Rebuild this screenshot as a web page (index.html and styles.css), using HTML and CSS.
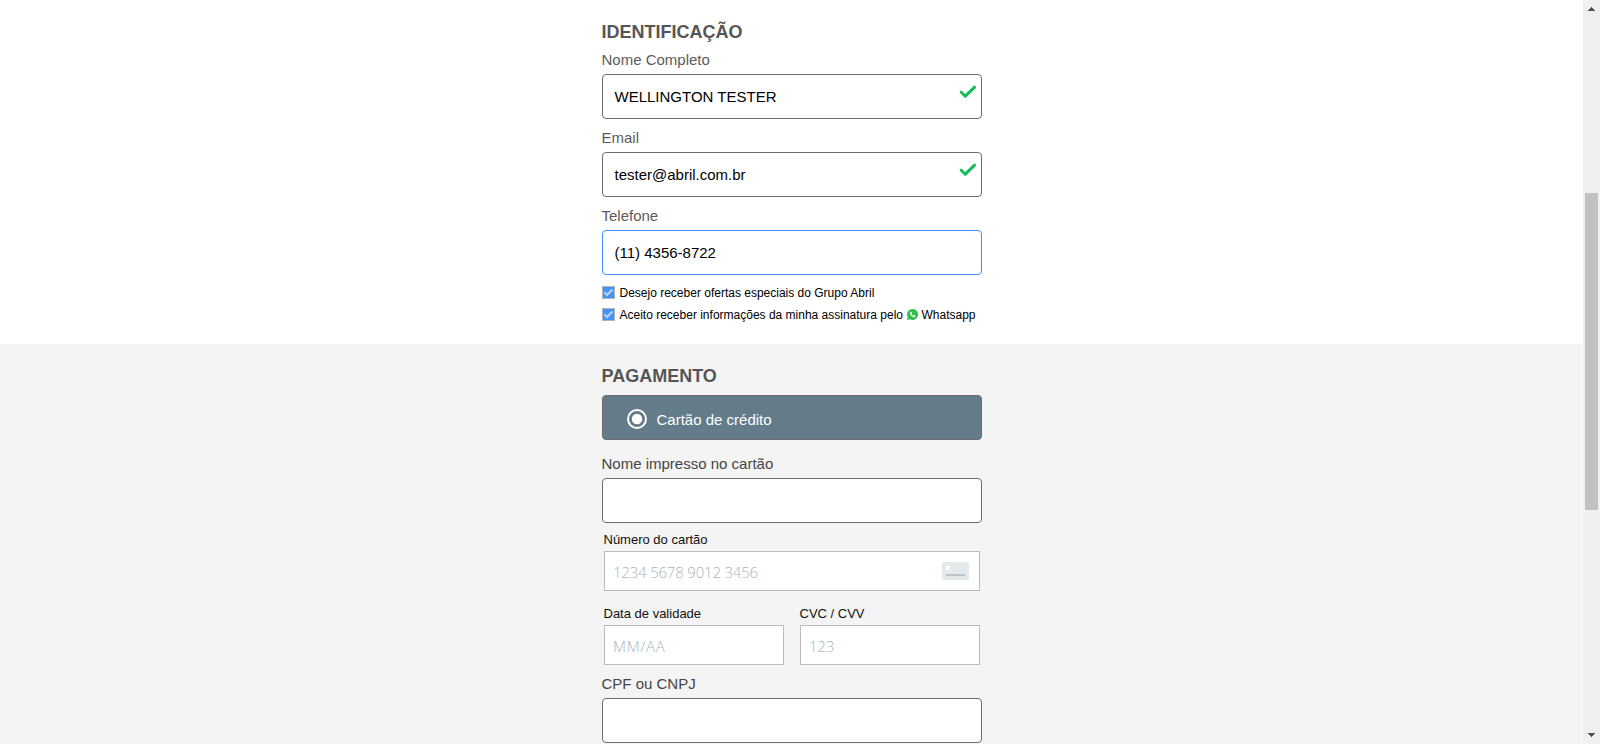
FILE: index.html
```html
<!DOCTYPE html>
<html lang="pt-BR">
<head>
<meta charset="utf-8">
<title>Assinatura</title>
<link rel="stylesheet" href="styles.css">
</head>
<body>
<div class="viewport">
  <main class="page">
    <section class="section identification">
      <div class="column">
        <h2 class="title">IDENTIFICAÇÃO</h2>
        <label class="label">Nome Completo</label>
        <div class="field"><span>WELLINGTON TESTER</span>
          <svg class="check" width="18" height="14" viewBox="0 0 18 14"><path d="M2.200 7.200 6.300 11.200 15.600 2.200"/></svg></div>
        <label class="label">Email</label>
        <div class="field"><span>tester@abril.com.br</span>
          <svg class="check" width="18" height="14" viewBox="0 0 18 14"><path d="M2.200 7.200 6.300 11.200 15.600 2.200"/></svg></div>
        <label class="label">Telefone</label>
        <div class="field focused"><span>(11) 4356-8722</span></div>
        <div class="options">
          <div class="option"><svg class="box" width="13" height="13" viewBox="0 0 13 13"><rect x=".5" y=".5" width="12" height="12"/><path d="M2.500 6.400 5 9 10.500 3.500"/></svg><span>Desejo receber ofertas especiais do Grupo Abril</span></div>
          <div class="option"><svg class="box" width="13" height="13" viewBox="0 0 13 13"><rect x=".5" y=".5" width="12" height="12"/><path d="M2.500 6.400 5 9 10.500 3.500"/></svg><span>Aceito receber informações da minha assinatura pelo</span>
            <svg class="whats" width="11" height="11" viewBox="0 0 22 22"><path class="bubble" d="M11 0a11 11 0 1 1-5 20.700L0 22l1.400-5.800A11 11 0 0 1 11 0z"/><path class="phone" d="M7.500 5.500c-2 1.200-2 3.600-.2 6.200 2 3 4.700 4.800 7.200 4.600 1.500-.2 2.400-1.300 2.300-2.700l-3-1.500-1.500 1.500c-1.500-.6-2.800-1.900-3.400-3.200l1.100-1.500-1.200-3.200z"/></svg><span>Whatsapp</span></div>
        </div>
      </div>
    </section>
    <section class="section payment">
      <div class="column">
        <h2 class="title">PAGAMENTO</h2>
        <div class="method"><svg width="20" height="20" viewBox="0 0 20 20"><circle class="ring" cx="10" cy="10" r="9"/><circle class="dot" cx="10" cy="10" r="5.200"/></svg><span>Cartão de crédito</span></div>
        <label class="label holder">Nome impresso no cartão</label>
        <div class="field"></div>
        <div class="card-form">
          <label class="small-label">Número do cartão</label>
          <div class="thin"><span class="number">1234 5678 9012 3456</span>
            <svg width="27" height="18" viewBox="0 0 27 18"><rect width="27" height="18" rx="2.500" fill="#e4e9ec"/><rect x="4" y="4" width="4" height="4" rx=".8" fill="#fff"/><rect x="4" y="12" width="19" height="2" fill="#b8c4c9"/></svg></div>
          <div class="pair">
            <div class="half"><label class="small-label">Data de validade</label><div class="thin"><span class="date">MM/AA</span></div></div>
            <div class="half"><label class="small-label">CVC / CVV</label><div class="thin"><span class="number">123</span></div></div>
          </div>
        </div>
        <label class="label document">CPF ou CNPJ</label>
        <div class="field"></div>
      </div>
    </section>
  </main>
  <aside class="scrollbar">
    <svg width="7" height="4" viewBox="0 0 7 4" shape-rendering="crispEdges"><path d="M3 0h1v1h1v1h1v1h1v1H0V3h1V2h1V1h1z"/></svg>
    <div class="thumb"></div>
    <svg class="down" width="7" height="4" viewBox="0 0 7 4" shape-rendering="crispEdges"><path d="M0 0h7v1H6v1H5v1H4v1H3V3H2V2H1V1H0z"/></svg>
  </aside>
</div>
</body>
</html>
```
FILE: styles.css
```css
* { box-sizing: border-box; }
body { margin: 0; font-family: "Liberation Sans", Arial, sans-serif; overflow: hidden; }
.viewport { display: flex; width: 1600px; height: 744px; overflow: hidden; }
.page { flex: 1; display: flex; flex-direction: column; }
.column { width: 380px; margin-left: 602px; }
.identification { height: 344px; padding-top: 21px; background: #fff; }
.payment { height: 400px; padding-top: 21px; background: #f4f4f4; }
.title { margin: 0 0 0 -0.5px; height: 22px; line-height: 22px; font-size: 18px; color: #555; white-space: nowrap; }
.label { display: block; height: 33px; margin-left: -0.5px; padding-top: 9px; line-height: 20px; font-size: 15px; color: #5c5c5c; }
.title + .label { height: 31px; padding-top: 7px; }
.payment .label { color: #444; }
.field { display: flex; align-items: center; justify-content: space-between; height: 45px; padding: 0 5px 0 11.5px; border: 1px solid #6c6c6c; border-radius: 4px; background: #fff; font-size: 15px; color: #000; white-space: nowrap; }
.focused { border-color: #3b8ff5; }
.check { margin-top: -10px; margin-right: -1px; fill: none; stroke: #12bd58; stroke-width: 3; stroke-linecap: round; }
.options { padding-top: 6px; }
.option { display: flex; align-items: center; height: 22px; font-size: 12px; white-space: nowrap; color: #000; }
.option span { padding-top: 1px; }
.box { margin-right: 4.5px; }
.box rect { fill: #4295f7; stroke: #b2b2b2; }
.box path { fill: none; stroke: #b9d6fa; stroke-width: 2; }
.whats { margin: 1px 4px 0 3.5px; }
.bubble { fill: #36bd4d; }
.phone { fill: #fff; }
.method { display: flex; align-items: center; gap: 9.5px; height: 45px; margin-top: 8px; padding: 3px 0 0 24px; border: 1px solid #6c6c6c; border-radius: 4px; background: #647c89; color: #fff; font-size: 15px; }
.ring { fill: none; stroke: #fff; stroke-width: 2; }
.dot { fill: #fff; }
.payment .holder { height: 38px; padding-top: 14px; }
.card-form { padding: 7px 2px 0; }
.small-label { display: block; height: 21px; margin-left: -0.5px; padding-top: 1px; line-height: 18px; font-size: 13px; color: #111; }
.thin { display: flex; align-items: center; justify-content: space-between; height: 40px; padding: 2px 10px 0 8px; border: 1px solid #bcbcbc; background: #fff; font-family: "Open Sans", "Noto Sans", sans-serif; font-size: 15px; color: #a9b6bc; }
.thin svg { margin-top: -3px; }
.number { font-weight: 300; letter-spacing: -0.2px; }
.date { font-weight: 300; letter-spacing: 0.7px; }
.pair { display: flex; gap: 16px; padding-top: 13px; }
.half { flex: 1; }
.payment .document { height: 33px; }
.scrollbar { display: flex; flex-direction: column; align-items: center; width: 17px; height: 744px; padding: 7px 0; background: #f0f0f0; fill: #505050; }
.thumb { width: 13px; height: 317px; margin-top: 182px; background: #c1c1c1; }
.down { margin-top: auto; }
```
